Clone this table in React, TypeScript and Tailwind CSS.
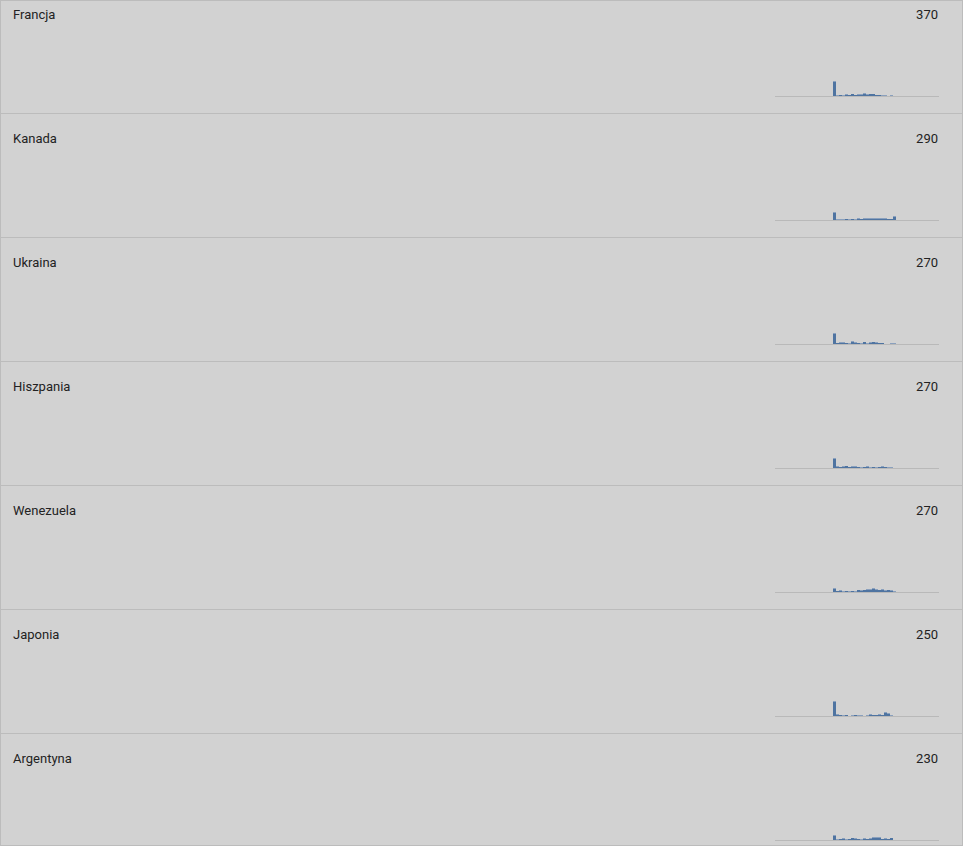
import React from 'react';

// [dark, light] heights in px for each bar
type Bar = [number, number];

const rows: { name: string; value: number; bars: Bar[] }[] = [
  {
    name: 'Francja',
    value: 370,
    bars: [[14, 1], [0, 1], [1, 0], [0, 1], [1, 1], [1, 0], [2, 0], [1, 0], [1, 1], [1, 1], [2, 1], [1, 1], [2, 0], [2, 0], [1, 0], [1, 0], [0, 1], [0, 1], [0, 0], [0, 1], [0, 0]],
  },
  {
    name: 'Kanada',
    value: 290,
    bars: [[7, 1], [0, 1], [0, 1], [0, 1], [1, 0], [0, 1], [1, 0], [0, 1], [1, 1], [1, 0], [1, 1], [1, 1], [1, 1], [1, 1], [1, 1], [1, 1], [1, 1], [1, 1], [1, 0], [1, 0], [3, 1]],
  },
  {
    name: 'Ukraina',
    value: 270,
    bars: [[10, 1], [1, 0], [1, 1], [1, 1], [1, 0], [0, 1], [2, 1], [1, 1], [1, 0], [0, 1], [2, 0], [0, 1], [1, 1], [2, 0], [1, 1], [1, 0], [1, 0], [0, 0], [0, 0], [0, 1], [0, 1]],
  },
  {
    name: 'Hiszpania',
    value: 270,
    bars: [[9, 1], [1, 1], [1, 0], [1, 1], [2, 0], [1, 0], [1, 1], [1, 1], [1, 0], [0, 1], [1, 0], [1, 1], [0, 1], [1, 0], [0, 1], [1, 0], [1, 1], [1, 0], [0, 1], [0, 1], [0, 0]],
  },
  {
    name: 'Wenezuela',
    value: 270,
    bars: [[3, 1], [1, 0], [1, 1], [0, 1], [1, 0], [0, 1], [1, 0], [0, 1], [2, 0], [1, 1], [2, 0], [2, 1], [2, 1], [3, 1], [2, 1], [2, 0], [2, 1], [1, 1], [2, 0], [1, 1], [0, 1]],
  },
  {
    name: 'Japonia',
    value: 250,
    bars: [[14, 1], [1, 1], [1, 0], [0, 1], [1, 0], [0, 0], [0, 1], [1, 0], [0, 1], [0, 1], [0, 0], [0, 1], [1, 1], [1, 0], [1, 0], [1, 1], [1, 0], [3, 1], [2, 1], [0, 1], [0, 0]],
  },
  {
    name: 'Argentyna',
    value: 230,
    bars: [[4, 1], [0, 1], [1, 0], [1, 1], [0, 1], [1, 0], [2, 0], [1, 1], [1, 0], [0, 1], [1, 1], [1, 0], [1, 1], [2, 1], [2, 1], [2, 1], [1, 0], [1, 1], [1, 0], [2, 0], [0, 0]],
  },
];

function Sparkline({ bars }: { bars: Bar[] }) {
  return (
    <div className="w-[164px] h-[20px] flex flex-col justify-end">
      <div className="flex items-end pl-[58px]">
        {bars.map(([dark, light], i) => (
          <div key={i} className="w-[3px] flex flex-col justify-end">
            {light > 0 && <div className="bg-[#8aa0bd]" style={{ height: light }} />}
            {dark > 0 && <div className="bg-[#4f74a1]" style={{ height: dark }} />}
          </div>
        ))}
      </div>
      <div className="h-px bg-[#b9b9b9]" />
    </div>
  );
}

export default function App() {
  return (
    <div className="h-[846px] w-[963px] overflow-hidden border border-[#bcbcbc] bg-[#d2d2d2] font-['Roboto',sans-serif] text-[13px] text-[#222]">
      <div className="-mt-[11px]">
        {rows.map((row) => (
          <div
            key={row.name}
            className="h-[124px] border-b border-[#bcbcbc] pl-3 pr-[23px] pt-[15px] pb-[16px] flex flex-col"
          >
            <div className="flex justify-between leading-5">
              <span>{row.name}</span>
              <span className="mr-px">{row.value}</span>
            </div>
            <div className="mt-auto self-end">
              <Sparkline bars={row.bars} />
            </div>
          </div>
        ))}
      </div>
    </div>
  );
}
